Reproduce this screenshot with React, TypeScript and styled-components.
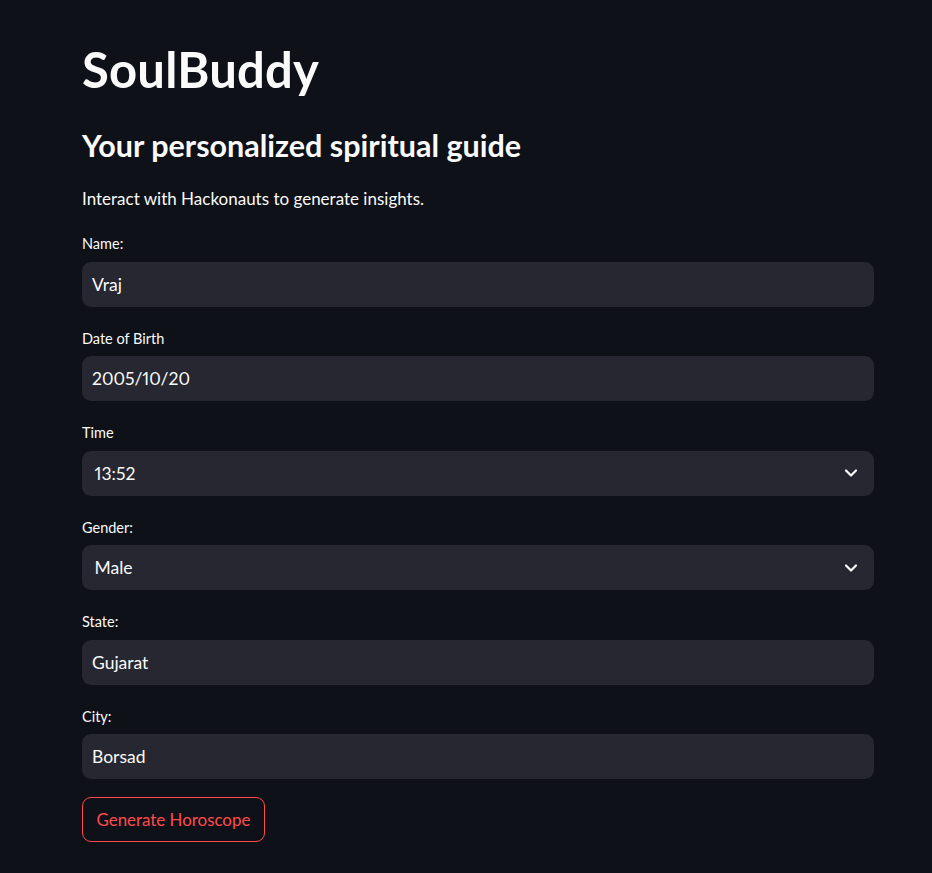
import React from "react";
import styled, { createGlobalStyle } from "styled-components";

const GlobalStyle = createGlobalStyle`
  html, body {
    margin: 0;
    padding: 0;
    background: #0e1117;
  }
  body {
    font-family: Lato, "Noto Sans", sans-serif;
    font-variant-numeric: proportional-nums;
    color: #fafafa;
  }
`;

type Field = {
  label: string;
  value: string;
  select?: boolean;
};

const FIELDS: Field[] = [
  { label: "Name:", value: "Vraj" },
  { label: "Date of Birth", value: "2005/10/20" },
  { label: "Time", value: "13:52", select: true },
  { label: "Gender:", value: "Male", select: true },
  { label: "State:", value: "Gujarat" },
  { label: "City:", value: "Borsad" },
];

function Chevron() {
  return (
    <svg width="14" height="10" viewBox="0 0 14 10" fill="none">
      <polyline
        points="2,2.5 7,7.5 12,2.5"
        stroke="#fafafa"
        strokeWidth="2.2"
        strokeLinecap="round"
        strokeLinejoin="round"
      />
    </svg>
  );
}

export default function App() {
  return (
    <Page>
      <GlobalStyle />
      <Main>
        <Title>SoulBuddy</Title>
        <Subtitle>Your personalized spiritual guide</Subtitle>
        <Intro>Interact with Hackonauts to generate insights.</Intro>
        <Form>
          {FIELDS.map((f) => (
            <Widget key={f.label}>
              <Label>{f.label}</Label>
              <InputBox $select={f.select}>
                <span>{f.value}</span>
                {f.select && <Chevron />}
              </InputBox>
            </Widget>
          ))}
          <Button>Generate Horoscope</Button>
        </Form>
      </Main>
    </Page>
  );
}

const Page = styled.div`
  min-height: 873px;
  background: #0e1117;
`;

const Main = styled.main`
  width: 792px;
  margin-left: 82px;
  padding-top: 39px;
  display: flex;
  flex-direction: column;
`;

const Title = styled.h1`
  margin: 0;
  font-size: 49px;
  line-height: 60px;
  font-weight: 700;
  letter-spacing: 0.2px;
`;

const Subtitle = styled.h2`
  margin: 26px 0 0;
  font-size: 30.5px;
  line-height: 40px;
  font-weight: 700;
`;

const Intro = styled.p`
  margin: 20px 0 0;
  font-size: 17px;
  line-height: 27px;
`;

const Form = styled.div`
  margin-top: 18px;
  display: flex;
  flex-direction: column;
  gap: 18px;
`;

const Widget = styled.div`
  display: flex;
  flex-direction: column;
`;

const Label = styled.label`
  height: 27px;
  margin-bottom: 4.5px;
  font-size: 14.5px;
  line-height: 27px;
`;

const InputBox = styled.div<{ $select?: boolean }>`
  height: 45px;
  box-sizing: border-box;
  background: #262730;
  border-radius: 9px;
  display: flex;
  align-items: center;
  justify-content: space-between;
  padding: 0 16px 0 ${(p) => (p.$select ? "12.5px" : "10px")};
  font-size: 17.5px;
`;

const Button = styled.button`
  align-self: flex-start;
  height: 45px;
  padding: 0 13.5px;
  background: transparent;
  border: 1px solid #ff4b4b;
  border-radius: 9px;
  color: #ff4b4b;
  font-family: inherit;
  font-size: 16.9px;
`;
